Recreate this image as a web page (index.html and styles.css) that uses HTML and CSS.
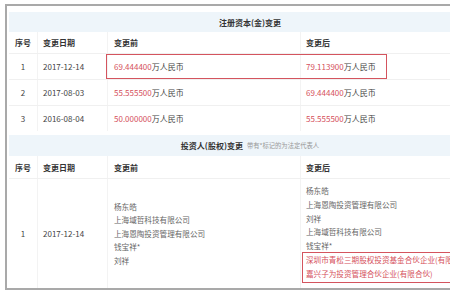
FILE: index.html
```html
<!DOCTYPE html>
<html>
<head>
<meta charset="utf-8">
<link rel="stylesheet" href="styles.css">
</head>
<body>
<div class="frame">
  <div class="sec">
    <div class="band">注册资本(金)变更</div>
    <div class="row head">
      <div class="c c1">序号</div><div class="c c2">变更日期</div><div class="c c3">变更前</div><div class="c c4">变更后</div>
    </div>
    <div class="row data marked">
      <div class="c c1">1</div><div class="c c2">2017-12-14</div>
      <div class="c c3"><span class="red">69.444400</span>万人民币</div>
      <div class="c c4"><span class="red">79.113900</span>万人民币</div>
      <div class="box1"></div>
    </div>
    <div class="row data">
      <div class="c c1">2</div><div class="c c2">2017-08-03</div>
      <div class="c c3"><span class="red">55.555500</span>万人民币</div>
      <div class="c c4"><span class="red">69.444400</span>万人民币</div>
    </div>
    <div class="row data">
      <div class="c c1">3</div><div class="c c2">2016-08-04</div>
      <div class="c c3"><span class="red">50.000000</span>万人民币</div>
      <div class="c c4"><span class="red">55.555500</span>万人民币</div>
    </div>
  </div>
  <div class="sec sec2">
    <div class="band band2">投资人(股权)变更<span class="note">带有*标记的为法定代表人</span></div>
    <div class="row head head2">
      <div class="c c1">序号</div><div class="c c2">变更日期</div><div class="c c3">变更前</div><div class="c c4">变更后</div>
    </div>
    <div class="row big">
      <div class="c c1">1</div><div class="c c2">2017-12-14</div>
      <div class="c c3 list">
        <div>杨东皓</div>
        <div>上海域哲科技有限公司</div>
        <div>上海恩陶投资管理有限公司</div>
        <div>钱宝祥*</div>
        <div>刘祥</div>
      </div>
      <div class="c c4 list">
        <div>杨东皓</div>
        <div>上海恩陶投资管理有限公司</div>
        <div>刘祥</div>
        <div>上海域哲科技有限公司</div>
        <div>钱宝祥*</div>
        <div class="box2">
          <div>深圳市青松三期股权投资基金合伙企业(有限合伙)</div>
          <div>嘉兴子为投资管理合伙企业(有限合伙)</div>
        </div>
      </div>
    </div>
  </div>
</div>
</body>
</html>
```

FILE: styles.css
```css
html { overflow: hidden; }
body {
  margin: 0;
  background: #fff;
  font-family: "Noto Sans CJK SC", "Noto Sans", sans-serif;
  font-size: 8px;
  color: #444;
}
.frame {
  margin: 4px 0 0 5px;
  width: 482px;
  border: 2px solid #a9a9a9;
  padding: 6px 0 0 2px;
}
.band {
  height: 20px;
  background: #eef5fa;
  display: flex;
  align-items: center;
  justify-content: center;
  font-weight: bold;
  color: #333;
}
.band2 { height: 21px; }
.note {
  font-weight: normal;
  font-size: 6.3px;
  color: #999;
  margin-left: 4px;
}
.sec2 { margin-top: 4px; }
.row {
  display: grid;
  grid-template-columns: 28px 70px 193px 1fr;
  box-sizing: border-box;
  position: relative;
}
.head { height: 21px; font-weight: bold; color: #333; }
.head2 { height: 22px; }
.data { height: 26px; border-top: 1px solid #f0f0f0; }
.big { height: 110px; border-top: 1px solid #f0f0f0; }
.c {
  display: flex;
  align-items: center;
  padding-left: 5px;
  white-space: nowrap;
}
.c + .c { border-left: 1px solid #f3f3f3; }
.c1 { justify-content: center; padding-left: 0; }
.c3 { padding-left: 6px; }
.red { color: #d5505c; }
.list {
  flex-direction: column;
  align-items: flex-start;
  justify-content: center;
  font-size: 7.6px;
  line-height: 13.6px;
  color: #666;
}
.box1 {
  position: absolute;
  left: 97px;
  top: 0;
  width: 281px;
  height: 25px;
  box-sizing: border-box;
  border: 1.5px solid #d4545e;
}
.box2 {
  margin-left: -4px;
  padding: 0 0 1px 3px;
  width: 200px;
  border: 1.5px solid #d4545e;
  color: #d5505c;
}
```
